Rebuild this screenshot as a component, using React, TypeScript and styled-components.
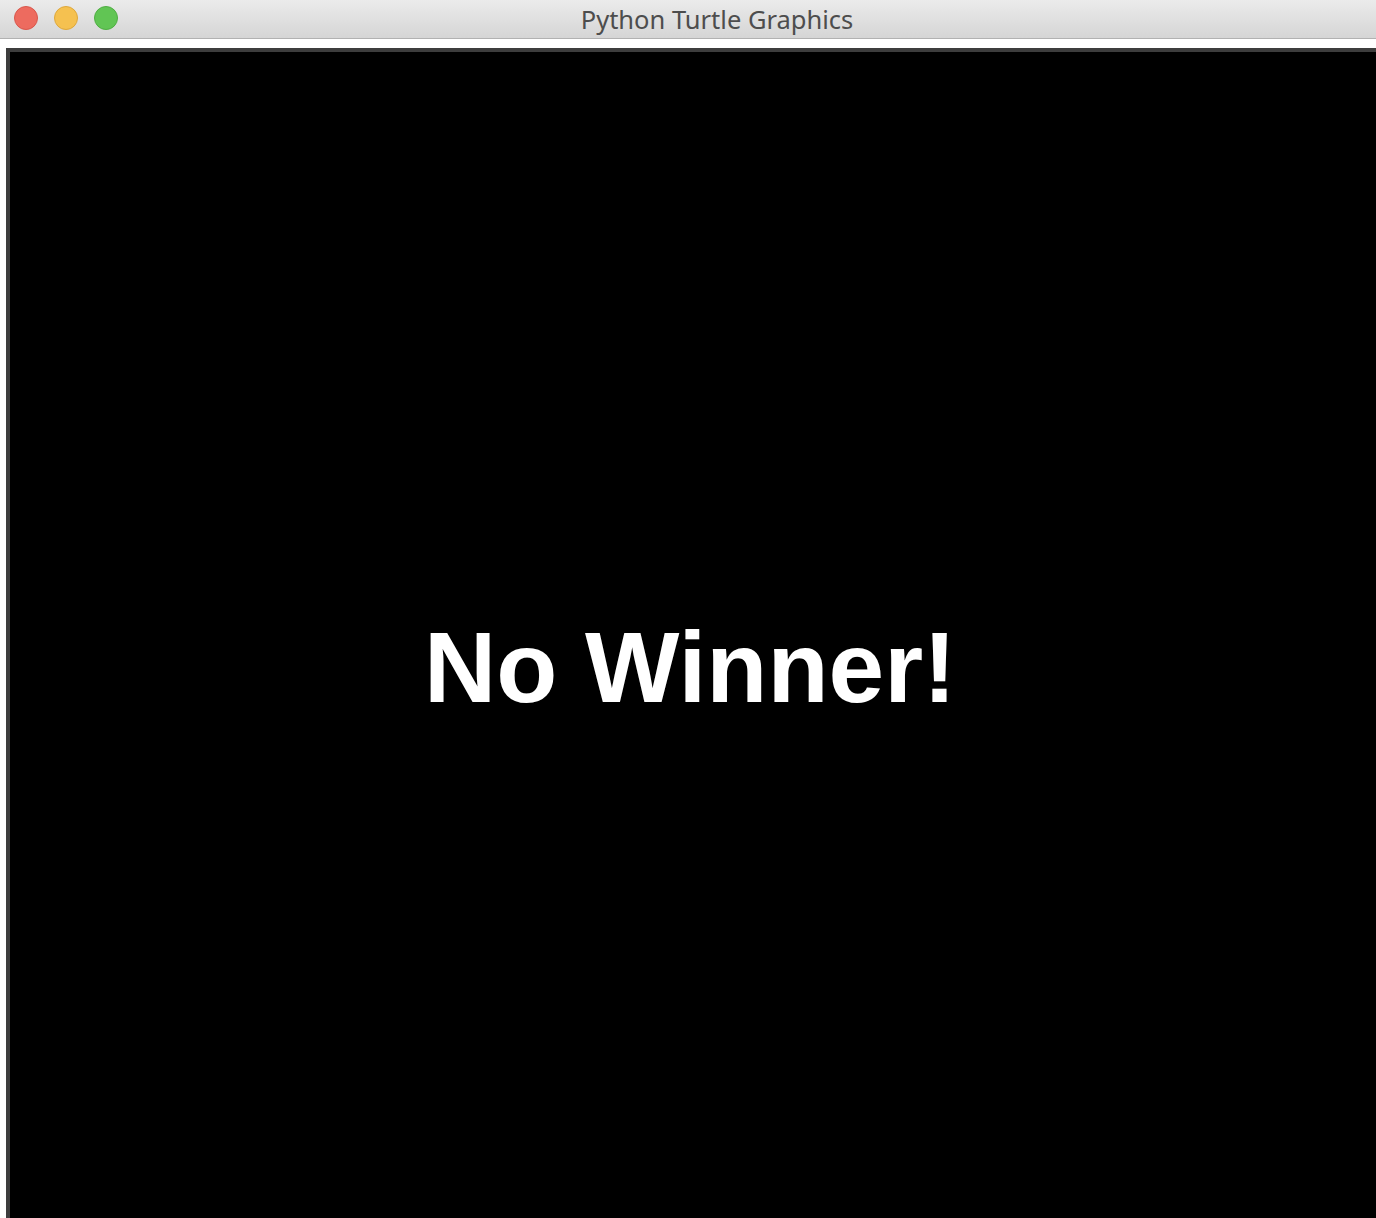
import React from "react";
import styled, { createGlobalStyle } from "styled-components";

const Global = createGlobalStyle`
  html, body { margin: 0; padding: 0; background: #ffffff; overflow: hidden; }
  #root { width: 1376px; height: 1218px; }
`;

const Window = styled.div`
  width: 1376px;
  height: 1218px;
  display: flex;
  flex-direction: column;
  background: #ffffff;
  overflow: hidden;
`;

const TitleBar = styled.div`
  position: relative;
  height: 38px;
  flex: 0 0 38px;
  background: linear-gradient(#ebebeb, #d5d5d5);
  border-bottom: 1px solid #b1b1b1;
  display: flex;
  align-items: center;
  justify-content: center;
`;

const Lights = styled.div`
  position: absolute;
  left: 14px;
  top: 6px;
  display: flex;
  gap: 16px;
`;

const Light = styled.span<{ $fill: string; $edge: string }>`
  width: 24px;
  height: 24px;
  border-radius: 50%;
  background: ${(p) => p.$fill};
  box-sizing: border-box;
  border: 1px solid ${(p) => p.$edge};
`;

const Title = styled.div`
  font-family: "Noto Sans", "Open Sans", sans-serif;
  font-size: 25.5px;
  line-height: 30px;
  color: #4d4d4d;
  padding-left: 58px;
  margin-top: -1px;
`;

const Body = styled.div`
  flex: 1;
  padding: 9px 0 0 6px;
  display: flex;
`;

const Canvas = styled.div`
  flex: 1;
  background: #000000;
  border-left: 4px solid #3d3d3d;
  border-top: 4px solid #3d3d3d;
  padding: 565px 0 0 414px;
`;

const Message = styled.div`
  font-family: "Liberation Sans", Arial, sans-serif;
  font-weight: 700;
  font-size: 100px;
  line-height: 100px;
  color: #ffffff;
  white-space: nowrap;
`;

export default function App() {
  return (
    <>
      <Global />
      <Window>
        <TitleBar>
          <Lights>
            <Light $fill="#ed6b5f" $edge="#d9574c" />
            <Light $fill="#f5c150" $edge="#dea83c" />
            <Light $fill="#61c554" $edge="#4fae43" />
          </Lights>
          <Title>Python Turtle Graphics</Title>
        </TitleBar>
        <Body>
          <Canvas>
            <Message>No Winner!</Message>
          </Canvas>
        </Body>
      </Window>
    </>
  );
}
